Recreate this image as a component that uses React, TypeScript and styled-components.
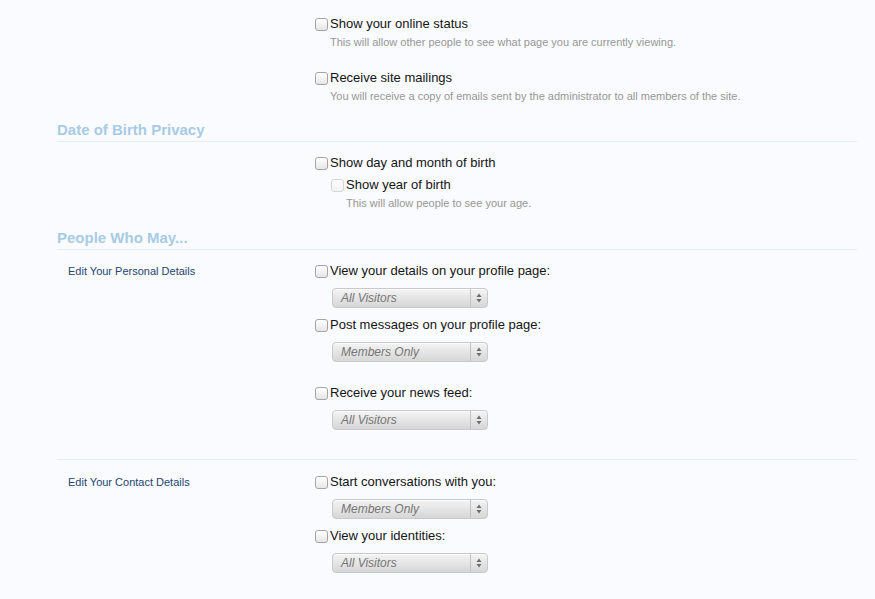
import React from "react";
import styled, { createGlobalStyle } from "styled-components";

const Global = createGlobalStyle`
  html, body { margin: 0; padding: 0; background: #fafbfe; }
  body { font-family: "Liberation Sans", Arial, sans-serif; }
`;

const Page = styled.div`
  width: 800px;
  margin-left: 57px;
  padding-top: 15px;
`;

const Block = styled.div<{ $mt?: number; $border?: boolean; $pb?: number }>`
  display: grid;
  grid-template-columns: 258px 1fr;
  margin-top: ${(p) => p.$mt ?? 0}px;
  padding-bottom: ${(p) => p.$pb ?? 0}px;
  border-bottom: ${(p) => (p.$border ? "1px solid #e3edf5" : "none")};
`;

const SideLabel = styled.div`
  padding-left: 11px;
  font-size: 11px;
  line-height: 18px;
  color: #24466e;
`;

const Fields = styled.div`
  display: flex;
  flex-direction: column;
`;

const Heading = styled.h3<{ $mt: number }>`
  margin: ${(p) => p.$mt}px 0 0;
  font-size: 15px;
  line-height: 20px;
  font-weight: bold;
  color: #a8cbe4;
  padding-bottom: 1px;
  border-bottom: 1px solid #e3edf5;
`;

const Option = styled.label<{ $mt?: number; $indent?: number }>`
  display: flex;
  align-items: center;
  gap: 2px;
  margin-top: ${(p) => p.$mt ?? 0}px;
  margin-left: ${(p) => p.$indent ?? 0}px;
  font-size: 13px;
  line-height: 18px;
  color: #141414;
`;

const Box = styled.span<{ $disabled?: boolean }>`
  display: inline-block;
  width: 11px;
  height: 11px;
  border: 1px solid ${(p) => (p.$disabled ? "#d6d6d6" : "#a4a4a4")};
  border-radius: 3px;
  background: ${(p) =>
    p.$disabled
      ? "linear-gradient(#fdfdfd, #f2f2f2)"
      : "linear-gradient(#ffffff, #e6e6e6)"};
  box-shadow: inset 0 1px 0 #fff;
`;

const Hint = styled.div<{ $indent?: number }>`
  margin-left: ${(p) => p.$indent ?? 15}px;
  font-size: 11px;
  line-height: 18px;
  color: #979797;
`;

const Select = styled.div<{ $mt?: number }>`
  width: 154px;
  height: 18px;
  margin-top: ${(p) => p.$mt ?? 8}px;
  margin-left: 17px;
  border: 1px solid #c9c9c9;
  border-radius: 4px;
  background: linear-gradient(#f4f4f4, #d6d6d6);
  box-shadow: inset 0 1px 0 #fbfbfb;
  display: flex;
  align-items: center;
`;

const SelectText = styled.span`
  flex: 1;
  padding-left: 8px;
  font-size: 12px;
  font-style: italic;
  color: #767676;
`;

const Arrows = styled.span`
  width: 16px;
  height: 100%;
  border-left: 1px solid #c2c2c2;
  display: flex;
  align-items: center;
  justify-content: center;
`;

const ArrowIcon = () => (
  <svg width="6" height="10" viewBox="0 0 6 10">
    <path d="M3 0.5 L5.5 4 L0.5 4 Z" fill="#6d6d6d" />
    <path d="M3 9.5 L5.5 6 L0.5 6 Z" fill="#6d6d6d" />
  </svg>
);

const Check = ({
  children,
  mt,
  indent,
  disabled,
}: {
  children: React.ReactNode;
  mt?: number;
  indent?: number;
  disabled?: boolean;
}) => (
  <Option $mt={mt} $indent={indent}>
    <Box $disabled={disabled} />
    {children}
  </Option>
);

const Dropdown = ({ value, mt }: { value: string; mt?: number }) => (
  <Select $mt={mt}>
    <SelectText>{value}</SelectText>
    <Arrows>
      <ArrowIcon />
    </Arrows>
  </Select>
);

export default function App() {
  return (
    <>
      <Global />
      <Page>
        <Block>
          <div />
          <Fields>
            <Check>Show your online status</Check>
            <Hint>This will allow other people to see what page you are currently viewing.</Hint>
            <Check mt={18}>Receive site mailings</Check>
            <Hint>You will receive a copy of emails sent by the administrator to all members of the site.</Hint>
          </Fields>
        </Block>
        <Heading $mt={15}>Date of Birth Privacy</Heading>
        <Block $mt={12}>
          <div />
          <Fields>
            <Check>Show day and month of birth</Check>
            <Check mt={4} indent={16} disabled>
              Show year of birth
            </Check>
            <Hint $indent={31}>This will allow people to see your age.</Hint>
          </Fields>
        </Block>
        <Heading $mt={16}>People Who May...</Heading>
        <Block $mt={12} $border $pb={29}>
          <SideLabel>Edit Your Personal Details</SideLabel>
          <Fields>
            <Check>View your details on your profile page:</Check>
            <Dropdown value="All Visitors" />
            <Check mt={8}>Post messages on your profile page:</Check>
            <Dropdown value="Members Only" />
            <Check mt={22}>Receive your news feed:</Check>
            <Dropdown value="All Visitors" />
          </Fields>
        </Block>
        <Block $mt={13}>
          <SideLabel>Edit Your Contact Details</SideLabel>
          <Fields>
            <Check>Start conversations with you:</Check>
            <Dropdown value="Members Only" />
            <Check mt={8}>View your identities:</Check>
            <Dropdown value="All Visitors" />
          </Fields>
        </Block>
      </Page>
    </>
  );
}
